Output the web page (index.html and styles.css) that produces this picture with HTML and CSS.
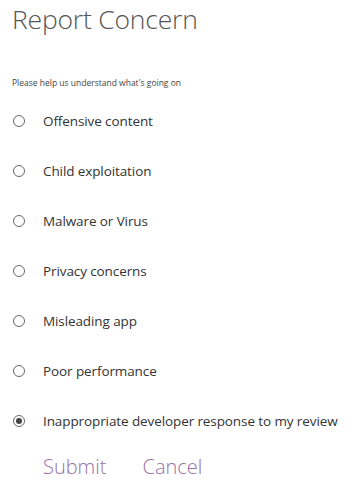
FILE: index.html
```html
<!DOCTYPE html>
<html lang="en">
<head>
<meta charset="UTF-8" />
<meta name="viewport" content="width=device-width, initial-scale=1" />
<title>Report Concern</title>
<link rel="stylesheet" href="styles.css">
</head>
<body>

<div id="app">
  <h1 class="title">Report Concern</h1>
  <p class="hint">Please help us understand what's going on</p>

  <form class="options">
    <label class="option"><input type="radio" name="concern" /><span class="dot"></span>Offensive content</label>
    <label class="option"><input type="radio" name="concern" /><span class="dot"></span>Child exploitation</label>
    <label class="option"><input type="radio" name="concern" /><span class="dot"></span>Malware or Virus</label>
    <label class="option"><input type="radio" name="concern" /><span class="dot"></span>Privacy concerns</label>
    <label class="option"><input type="radio" name="concern" /><span class="dot"></span>Misleading app</label>
    <label class="option"><input type="radio" name="concern" /><span class="dot"></span>Poor performance</label>
    <label class="option"><input type="radio" name="concern" checked /><span class="dot"></span>Inappropriate developer response to my review</label>

    <div class="actions">
      <button type="button" class="link-btn">Submit</button>
      <button type="button" class="link-btn">Cancel</button>
    </div>
  </form>
</div>

</body>
</html>
```

FILE: styles.css
```css
html, body {
  margin: 0;
  padding: 0;
  background: #fff;
  font-family: 'Open Sans', 'Noto Sans', sans-serif;
  color: #333;
}

#app {
  padding: 0 0 0 12px;
}

.title {
  margin: 0;
  padding-top: 1px;
  font-size: 26.5px;
  font-weight: 300;
  line-height: 36px;
  color: #555;
  letter-spacing: -0.2px;
}

.hint {
  margin: 40px 0 0;
  font-size: 8.5px;
  line-height: 12px;
  color: #444;
}

.options {
  display: flex;
  flex-direction: column;
  margin-top: 7px;
}

.option {
  display: flex;
  align-items: center;
  height: 50px;
  font-size: 13.5px;
  letter-spacing: -0.1px;
  white-space: nowrap;
  color: #333;
}

.option input {
  display: none;
}

.dot {
  width: 12px;
  height: 12px;
  border: 1.3px solid #666;
  border-radius: 50%;
  box-sizing: border-box;
  margin: 0 18px 0 1px;
  flex: none;
  position: relative;
}

.option input:checked + .dot::after {
  content: '';
  position: absolute;
  inset: 1.9px;
  border-radius: 50%;
  background: #444;
}

.actions {
  display: flex;
  gap: 36px;
  padding-left: 31px;
  margin-top: 7px;
}

.link-btn {
  border: none;
  background: none;
  padding: 0;
  font-family: inherit;
  font-size: 20px;
  font-weight: 300;
  color: #9b6fa8;
  cursor: pointer;
}
```
